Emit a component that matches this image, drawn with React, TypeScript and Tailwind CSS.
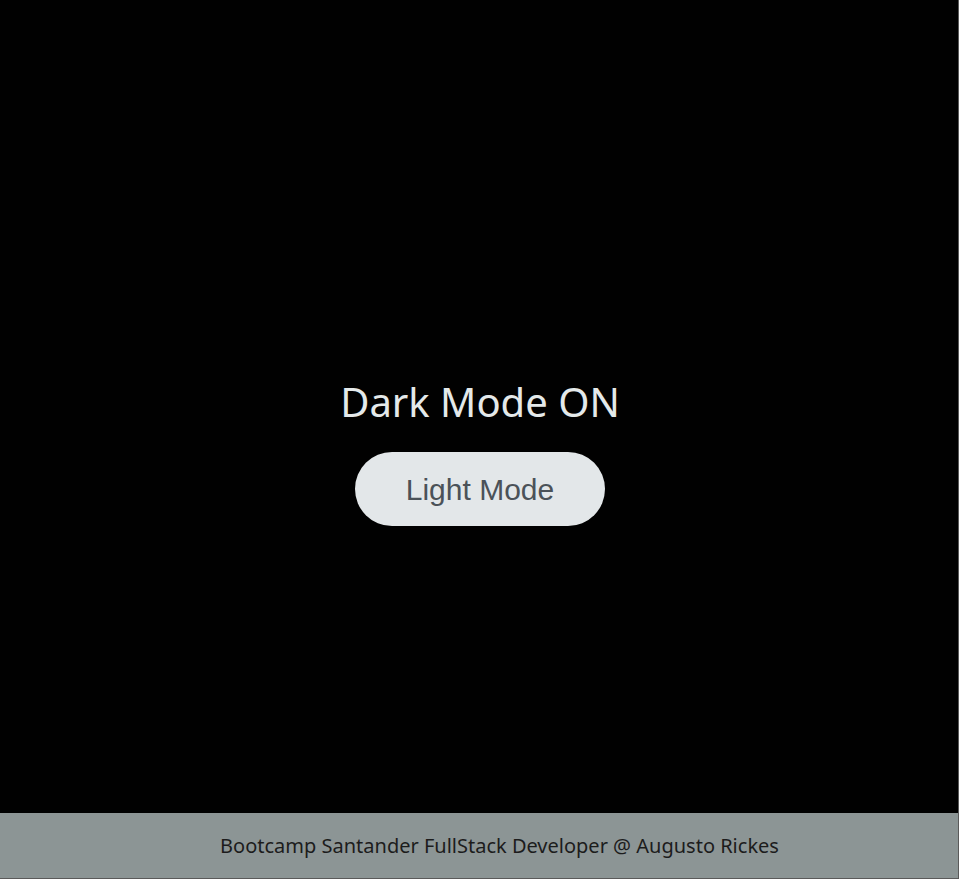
export default function App() {
  return (
    <div className="w-[959px] h-[879px] flex flex-col bg-[#010101] border-r border-b border-[#5a5a5a] overflow-hidden">
      <main className="flex-1 flex flex-col items-center justify-center">
        <div className="flex flex-col items-center pt-[91px] pl-[2px]">
          <h1
            className="text-[40px] leading-[48px] font-normal text-[#e4e9ea]"
            style={{ fontFamily: '"Noto Sans", Lato, sans-serif' }}
          >
            Dark Mode ON
          </h1>
          <button
            className="mt-[26px] w-[250px] h-[74px] rounded-full bg-[#e3e7e9] text-[#4b5258] text-[30px]"
            style={{ fontFamily: '"Liberation Sans", Arial, sans-serif' }}
          >
            Light Mode
          </button>
        </div>
      </main>
      <footer
        className="h-[65px] shrink-0 bg-[#8c9595] flex items-center justify-center pl-[41px] text-[20px] text-[#1c1c1c]"
        style={{ fontFamily: '"Noto Sans", Lato, sans-serif' }}
      >
        Bootcamp Santander FullStack Developer @ Augusto Rickes
      </footer>
    </div>
  );
}
